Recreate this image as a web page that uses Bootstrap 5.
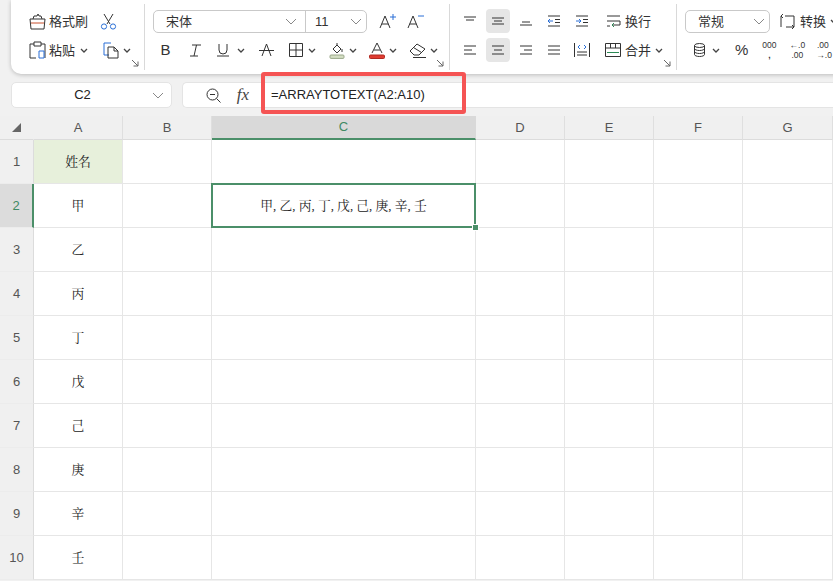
<!DOCTYPE html>
<html lang="zh-CN">
<head>
  <meta charset="UTF-8" />
  <meta name="viewport" content="width=device-width, initial-scale=1.0" />
  <title>ARRAYTOTEXT</title>
  <link href="https://cdn.jsdelivr.net/npm/bootstrap@5.3.0/dist/css/bootstrap.min.css" rel="stylesheet">
  <style>
    html, body { height: 581px; overflow: hidden; }
    body { background: #f1f1f1; color: #333; font-family: "Liberation Sans", "Noto Sans CJK SC", sans-serif; font-size: 13px; }
    svg { display: block; flex: none; fill: none; stroke: #333; stroke-width: 1; }
    .ribbon { height: 74px; width: 840px; margin-left: 11px; background: #fff; border-radius: 0 0 0 10px; box-shadow: 0 1px 4px rgba(0,0,0,.22); }
    .rib-group { height: 66px; margin-top: 4px; border-right: 1px solid #d9d9d9; position: relative; flex: none; }
    .g1 { width: 134px; padding-left: 18px; }
    .g2 { width: 305px; padding-left: 8px; }
    .g3 { width: 227px; padding-left: 6px; }
    .g4 { flex: 1; border-right: 0; padding-left: 8px; }
    .rib-row { height: 24px; margin-top: 5px; }
    .tool { width: 28px; height: 24px; border-radius: 4px; flex: none; }
    .tool.on { width: 24px; margin: 0 2px; background: #e6e6e6; }
    .lbl { font-size: 13px; white-space: nowrap; color: #333; line-height: 1; }
    .gap3 { margin-left: 3px; }
    .chev { stroke: #444; stroke-width: 1.3; }
    .thin { stroke: #888; }
    .corner { position: absolute; right: 5px; bottom: 3px; stroke: #666; }
    .sel-box { height: 23px; border: 1px solid #c9c9c9; border-radius: 5px; background: #fff; }
    .font-box { width: 214px; }
    .font-name { width: 152px; padding-left: 12px; border-right: 1px solid #c9c9c9; }
    .font-size { flex: 1; padding-left: 9px; }
    .num-box { width: 85px; padding-left: 12px; }
    .bold-b { font-size: 15px; font-weight: 500; color: #333; margin-left: -3px; }
    .pct { margin-left: 15px; font-size: 15px; color: #333; }
    .num-lbl { font-size: 8.5px; line-height: 10px; text-align: center; color: #333; flex: none; white-space: nowrap; }
    .bar-row { height: 26px; margin: 8px 0 8px 11px; gap: 10px; }
    .name-box, .formula-box { background: #fff; border: 1px solid #e4e4e4; border-radius: 5px; height: 26px; flex: none; }
    .name-box { width: 161px; color: #222; padding-right: 7px; }
    .name-text { flex: 1; text-align: center; padding-left: 1px; }
    .formula-box { width: 660px; position: relative; padding-left: 23px; border-right: 0; }
    .fx { width: 44px; font-family: "Liberation Serif", serif; font-style: italic; font-size: 17px; text-align: center; color: #444; }
    .formula-text { margin-left: 6px; color: #222; white-space: nowrap; }
    .red-mark { position: absolute; left: 78px; top: -11px; width: 205px; height: 42px; border: 4px solid #f55454; border-radius: 3px; pointer-events: none; }
    .sheet { display: grid; grid-template-columns: 34px 89px 89px 264px 89px 89px 89px 90px; grid-template-rows: 24px repeat(10, 44px); background: #fff; }
    .sheet > div { display: flex; align-items: center; justify-content: center; padding-top: 2px; border-right: 1px solid #e6e6e6; border-bottom: 1px solid #e6e6e6; font-family: "Liberation Serif", "Noto Serif CJK SC", "Noto Sans CJK SC", serif; color: #222; font-size: 12.8px; }
    .sheet > div.col-head { padding-top: 0; background: #f0f0f0; color: #555; font-family: "Liberation Sans", sans-serif; font-size: 13px; border-right-color: #dfdfdf; border-bottom-color: #dcdcdc; }
    .sheet > div.row-head { padding-top: 0; background: #f0f0f0; color: #555; font-family: "Liberation Sans", sans-serif; font-size: 13px; border-right-color: #dcdcdc; border-bottom-color: #ececec; }
    .sheet > div.corner-head { border-right-color: #f0f0f0; }
    .sheet > div.col-on { background: #d9d9d9; color: #3f8a63; border-bottom: 2px solid #4b8f69; border-right-color: #d9d9d9; }
    .sheet > div.row-on { background: #dcdcdc; color: #3f8a63; border-right: 2px solid #4b8f69; }
    .sheet > div.title-cell { background: #e7f0db; }
    .sheet > div.active-cell { position: relative; }
    .active-cell::before { content: ""; position: absolute; left: -1px; top: -1px; right: -1px; bottom: -1px; border: 2px solid #4b8f69; }
    .active-cell::after { content: ""; position: absolute; right: -4px; bottom: -4px; width: 7px; height: 7px; background: #4b8f69; border: 1px solid #fff; }
  </style>
</head>
<body>
  <svg width="0" height="0" class="position-absolute">
    <symbol id="ch" viewBox="0 0 8 5"><path d="M1 1l3 3 3-3"/></symbol>
    <symbol id="thin" viewBox="0 0 12 7"><path d="M1 1l5 5 5-5"/></symbol>
    <symbol id="arr" viewBox="0 0 8 8"><path d="M1 1l6 6M7 2.5V7H2.5"/></symbol>
  </svg>

  <!-- Ribbon -->
  <div class="ribbon d-flex">
    <div class="rib-group g1">
      <div class="rib-row d-flex align-items-center">
        <svg width="17" height="17" viewBox="0 0 17 17"><path d="M1 6h15l-1 10H2zM4 6l1-3h3l1-2 1 2h2l1 3"/><path d="M2 10h13" stroke="#c8512f"/></svg>
        <span class="lbl gap3">格式刷</span>
        <svg style="margin-left:12px" width="17" height="17" viewBox="0 0 17 17"><path d="M4 1l6 10M13 1L7 11"/><circle cx="4" cy="13.500" r="2.600" stroke="#2a6fd6"/><circle cx="13" cy="13.500" r="2.600" stroke="#2a6fd6"/></svg>
      </div>
      <div class="rib-row d-flex align-items-center">
        <svg width="17" height="18" viewBox="0 0 17 18"><path d="M5 3H1v14h6M12 3h4v14"/><path d="M5 1h7v4H5z"/><path d="M10 10h5v7h-5z" stroke="#2a6fd6"/></svg>
        <span class="lbl gap3">粘贴</span>
        <svg class="chev" style="margin-left:5px" width="8" height="5"><use href="#ch"/></svg>
        <svg style="margin-left:15px" width="17" height="17" viewBox="0 0 17 17"><path d="M6 13H1V1h7" stroke="#2a6fd6"/><path d="M5 5h6l4 4v7H5z"/><path d="M11 5v4h4"/></svg>
        <svg class="chev" style="margin-left:3px" width="8" height="5"><use href="#ch"/></svg>
      </div>
      <svg class="corner" width="8" height="8"><use href="#arr"/></svg>
    </div>

    <div class="rib-group g2">
      <div class="rib-row d-flex align-items-center">
        <div class="sel-box font-box d-flex align-items-center">
          <div class="font-name d-flex align-items-center justify-content-between h-100 pe-2"><span class="lbl">宋体</span><svg class="thin" width="12" height="7"><use href="#thin"/></svg></div>
          <div class="font-size d-flex align-items-center justify-content-between pe-1"><span class="lbl">11</span><svg class="thin" width="12" height="7"><use href="#thin"/></svg></div>
        </div>
        <svg style="margin-left:12px" width="18" height="16" viewBox="0 0 18 16"><path d="M1 15L6 3l5 12M2.700 11h6.600"/><path d="M11 4h6M14 1v6" stroke="#2a6fd6"/></svg>
        <svg style="margin-left:10px" width="18" height="16" viewBox="0 0 18 16"><path d="M1 15L6 3l5 12M2.700 11h6.600"/><path d="M11 3h6" stroke="#2a6fd6"/></svg>
      </div>
      <div class="rib-row d-flex align-items-center">
        <div class="tool d-flex align-items-center justify-content-center"><span class="bold-b">B</span></div>
        <div class="tool d-flex align-items-center justify-content-center"><svg width="11" height="13" viewBox="0 0 11 13"><path d="M2 1h9M0 12h8M6.500 1L4 12"/></svg></div>
        <div class="tool d-flex align-items-center justify-content-center"><svg width="12" height="14" viewBox="0 0 12 14"><path d="M2 1v6a4 4 0 0 0 8 0V1M0 13h12"/></svg></div>
        <svg class="chev" width="8" height="5"><use href="#ch"/></svg>
        <svg style="margin-left:14px" width="15" height="14" viewBox="0 0 15 14"><path d="M3 13L7.500 1 12 13M0 7.500h15"/></svg>
        <svg style="margin-left:15px" width="14" height="14" viewBox="0 0 14 14"><path d="M.5.5h13v13H.5zM7 .5v13M.5 7h13"/></svg>
        <svg class="chev" style="margin-left:5px" width="8" height="5"><use href="#ch"/></svg>
        <svg style="margin-left:13px" width="16" height="17" viewBox="0 0 16 17"><path d="M4 7l4-4 4 4-4 4zM8 3V1M13 7v3"/><rect x="1" y="13" width="14" height="3.400" rx="1" fill="#d5dfc4" stroke="#9aa88a"/></svg>
        <svg class="chev" style="margin-left:4px" width="8" height="5"><use href="#ch"/></svg>
        <svg style="margin-left:12px" width="16" height="17" viewBox="0 0 16 17"><path d="M3 11L8 1l5 10M5 8h6"/><rect x=".5" y="13" width="15" height="3.500" rx="1" fill="#e03c31" stroke="#b02a22"/></svg>
        <svg class="chev" style="margin-left:4px" width="8" height="5"><use href="#ch"/></svg>
        <svg style="margin-left:12px" width="20" height="15" viewBox="0 0 20 15"><path d="M1 8l7-7 8 5-6 6H5zM4.500 4.500l8 5M4 14.500h13"/></svg>
        <svg class="chev" style="margin-left:1px" width="8" height="5"><use href="#ch"/></svg>
      </div>
      <svg class="corner" width="8" height="8"><use href="#arr"/></svg>
    </div>

    <div class="rib-group g3">
      <div class="rib-row d-flex align-items-center">
        <div class="tool d-flex align-items-center justify-content-center"><svg width="12" height="12" viewBox="0 0 12 12"><path d="M0 2h12M2 5h8"/></svg></div>
        <div class="tool on d-flex align-items-center justify-content-center"><svg width="12" height="8" viewBox="0 0 12 8"><path d="M0 1h12M2 4h8M0 7h12"/></svg></div>
        <div class="tool d-flex align-items-center justify-content-center"><svg width="12" height="12" viewBox="0 0 12 12"><path d="M2 7h8M0 10h12"/></svg></div>
        <div class="tool d-flex align-items-center justify-content-center"><svg width="14" height="12" viewBox="0 0 14 12"><path d="M1 1h12M8 4.500h5M8 7.500h5M1 11h12"/><path d="M6 6H1m2-2L1 6l2 2" stroke="#2a6fd6"/></svg></div>
        <div class="tool d-flex align-items-center justify-content-center"><svg width="14" height="12" viewBox="0 0 14 12"><path d="M1 1h12M8 4.500h5M8 7.500h5M1 11h12"/><path d="M1 6h5M4 4l2 2-2 2" stroke="#2a6fd6"/></svg></div>
        <svg style="margin-left:10px" width="15" height="14" viewBox="0 0 15 14"><path d="M1 2h13M1 7h13v4H6M1 12h3"/><path d="M8 9l-2 2 2 2" stroke="#2c8a55"/></svg>
        <span class="lbl" style="margin-left:4px">换行</span>
      </div>
      <div class="rib-row d-flex align-items-center">
        <div class="tool d-flex align-items-center justify-content-center"><svg width="12" height="10" viewBox="0 0 12 10"><path d="M0 1h12M0 5h8M0 9h12"/></svg></div>
        <div class="tool on d-flex align-items-center justify-content-center"><svg width="12" height="10" viewBox="0 0 12 10"><path d="M0 1h12M2 5h8M0 9h12"/></svg></div>
        <div class="tool d-flex align-items-center justify-content-center"><svg width="12" height="10" viewBox="0 0 12 10"><path d="M0 1h12M4 5h8M0 9h12"/></svg></div>
        <div class="tool d-flex align-items-center justify-content-center"><svg width="12" height="10" viewBox="0 0 12 10"><path d="M0 1h12M0 5h12M0 9h12"/></svg></div>
        <div class="tool d-flex align-items-center justify-content-center"><svg width="16" height="14" viewBox="0 0 16 14"><path d="M.5 0v14M15.500 0v14M3 9h10M3 12h10"/><path d="M6 2L4 4l2 2M10 2l2 2-2 2" stroke="#2a6fd6"/></svg></div>
        <svg style="margin-left:9px" width="16" height="14" viewBox="0 0 16 14"><path d="M.5.5h15v13H.5zM.5 5h15M5.500.5V5M10.500.5V5"/><path d="M2 9.500h12" stroke="#2c8a55"/></svg>
        <span class="lbl" style="margin-left:4px">合并</span>
        <svg class="chev" style="margin-left:4px" width="8" height="5"><use href="#ch"/></svg>
      </div>
      <svg class="corner" width="8" height="8"><use href="#arr"/></svg>
    </div>

    <div class="rib-group g4">
      <div class="rib-row d-flex align-items-center">
        <div class="sel-box num-box d-flex align-items-center justify-content-between pe-1"><span class="lbl">常规</span><svg class="thin" width="12" height="7"><use href="#thin"/></svg></div>
        <svg style="margin-left:10px" width="15" height="15" viewBox="0 0 15 15"><path d="M5 2h9v11H6M1 13V2h1M3 0L1 2l2 2M12 11l2 2-2 2"/></svg>
        <span class="lbl" style="margin-left:5px">转换</span>
        <svg class="chev" style="margin-left:4px" width="8" height="5"><use href="#ch"/></svg>
      </div>
      <div class="rib-row d-flex align-items-center">
        <svg style="margin-left:9px" width="11" height="14" viewBox="0 0 11 14"><ellipse cx="5.500" cy="2.500" rx="5" ry="2"/><path d="M.5 2.500v9c0 1 2 2 5 2s5-1 5-2v-9M.5 5.500c0 1 2 2 5 2s5-1 5-2M.5 8.500c0 1 2 2 5 2s5-1 5-2"/></svg>
        <svg class="chev" style="margin-left:7px" width="8" height="5"><use href="#ch"/></svg>
        <span class="pct">%</span>
        <div class="num-lbl" style="margin-left:14px;width:14px">000<br><b>,</b></div>
        <div class="num-lbl" style="margin-left:13px;width:16px">←.0<br>.00</div>
        <div class="num-lbl" style="margin-left:11px;width:13px">.00<br>→.0</div>
      </div>
    </div>
  </div>

  <!-- Name box + formula bar -->
  <div class="bar-row d-flex">
    <div class="name-box d-flex align-items-center"><span class="name-text">C2</span><svg class="thin" width="12" height="7"><use href="#thin"/></svg></div>
    <div class="formula-box d-flex align-items-center">
      <svg width="15" height="15" viewBox="0 0 15 15"><circle cx="6.500" cy="6.500" r="5.500"/><path d="M4 6.500h5M10.500 10.500l4 4"/></svg>
      <span class="fx">fx</span>
      <span class="formula-text">=ARRAYTOTEXT(A2:A10)</span>
      <div class="red-mark"></div>
    </div>
  </div>

  <!-- Sheet -->
  <div class="sheet">
    <div class="col-head corner-head"><svg width="9" height="9" viewBox="0 0 9 9"><path d="M9 0v9H0z" fill="#666" stroke="none"/></svg></div>
    <div class="col-head">A</div><div class="col-head">B</div><div class="col-head col-on">C</div><div class="col-head">D</div><div class="col-head">E</div><div class="col-head">F</div><div class="col-head">G</div>

    <div class="row-head">1</div><div class="title-cell">姓名</div><div></div><div></div><div></div><div></div><div></div><div></div>
    <div class="row-head row-on">2</div><div>甲</div><div></div><div class="active-cell">甲, 乙, 丙, 丁, 戊, 己, 庚, 辛, 壬</div><div></div><div></div><div></div><div></div>
    <div class="row-head">3</div><div>乙</div><div></div><div></div><div></div><div></div><div></div><div></div>
    <div class="row-head">4</div><div>丙</div><div></div><div></div><div></div><div></div><div></div><div></div>
    <div class="row-head">5</div><div>丁</div><div></div><div></div><div></div><div></div><div></div><div></div>
    <div class="row-head">6</div><div>戊</div><div></div><div></div><div></div><div></div><div></div><div></div>
    <div class="row-head">7</div><div>己</div><div></div><div></div><div></div><div></div><div></div><div></div>
    <div class="row-head">8</div><div>庚</div><div></div><div></div><div></div><div></div><div></div><div></div>
    <div class="row-head">9</div><div>辛</div><div></div><div></div><div></div><div></div><div></div><div></div>
    <div class="row-head">10</div><div>壬</div><div></div><div></div><div></div><div></div><div></div><div></div>
  </div>

  <script src="https://cdn.jsdelivr.net/npm/bootstrap@5.3.0/dist/js/bootstrap.bundle.min.js"></script>
</body>
</html>
